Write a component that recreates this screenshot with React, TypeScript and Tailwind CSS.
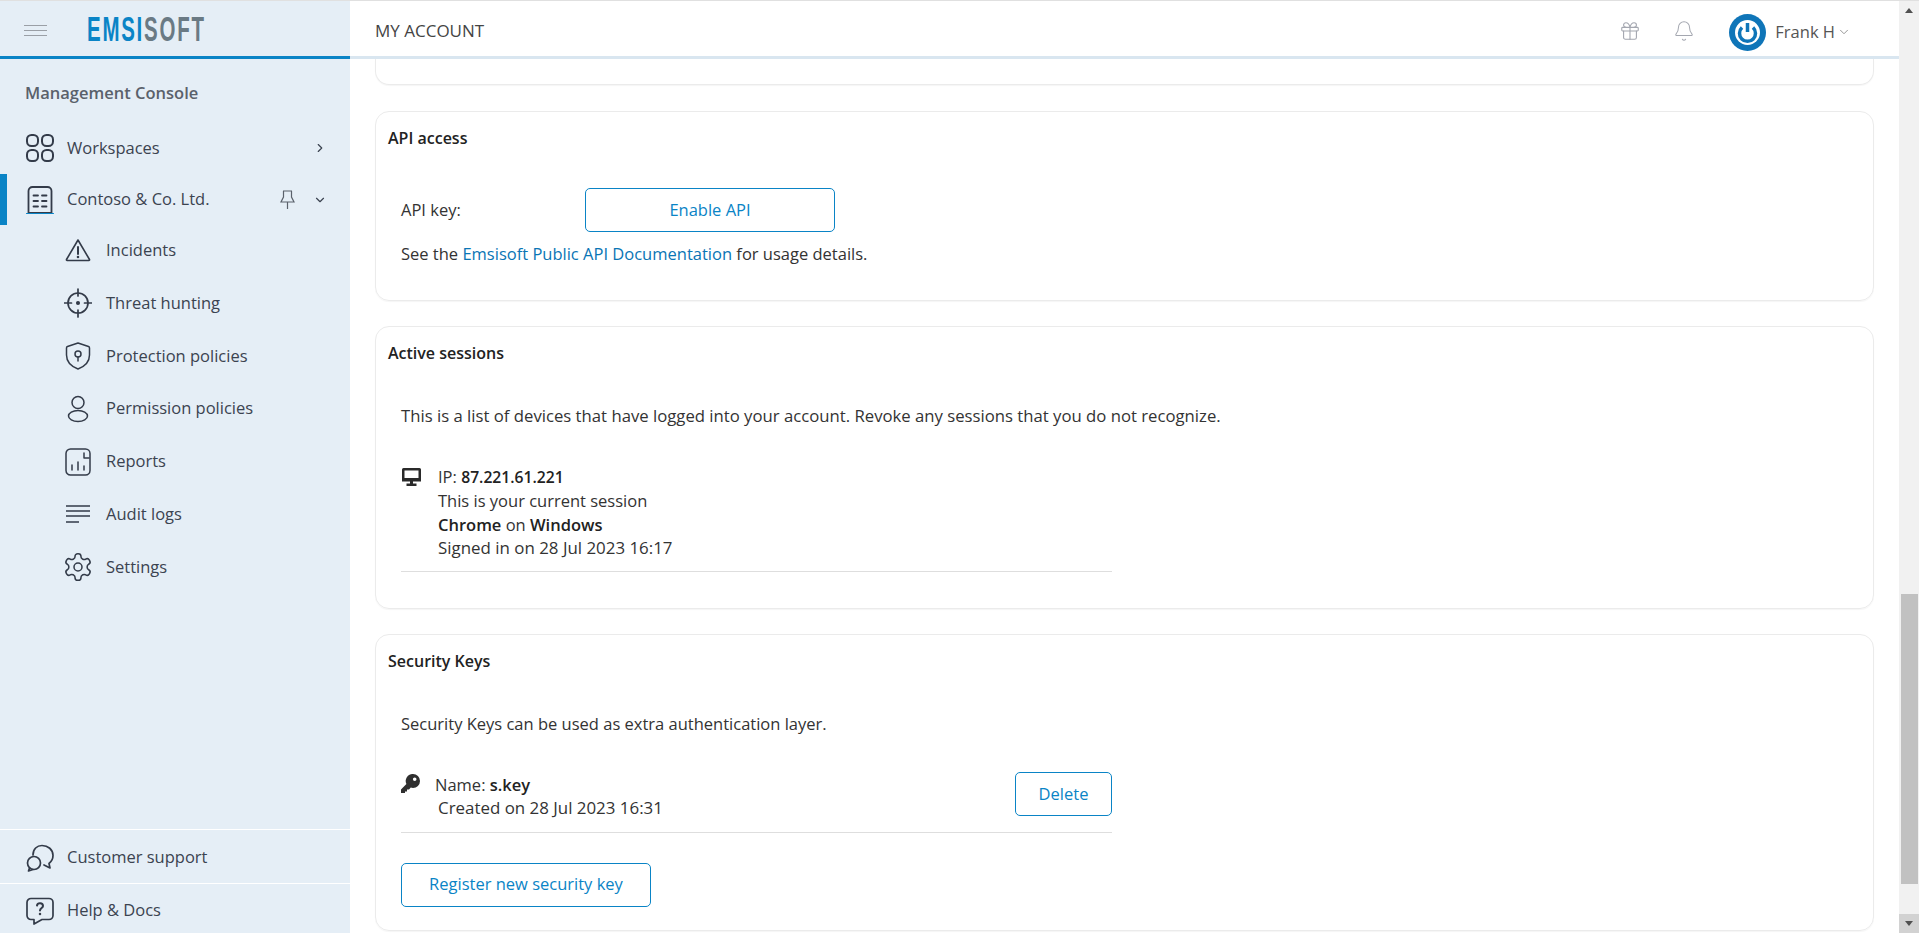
import React from 'react';
import { ChevronDown, ChevronRight, Gift, Bell } from 'lucide-react';

const iconProps = {
  fill: 'none',
  stroke: '#333b49',
  strokeWidth: 1.5,
  strokeLinecap: 'round' as const,
  strokeLinejoin: 'round' as const,
};

const WorkspacesIcon = () => (
  <svg width="28" height="28" viewBox="0 0 28 28" {...iconProps} strokeWidth={2}>
    <rect x="1" y="1" width="11" height="11" rx="4.5" />
    <rect x="16" y="1" width="11" height="11" rx="4.5" />
    <rect x="1" y="16" width="11" height="11" rx="4.5" />
    <rect x="16" y="16" width="11" height="11" rx="4.5" />
  </svg>
);

const BuildingIcon = () => (
  <svg width="28" height="28" viewBox="0 0 28 28" {...iconProps} strokeWidth={1.8}>
    <path d="M2.500 27V5a4 4 0 0 1 4-4h15a4 4 0 0 1 4 4v22z" />
    <path d="M7.500 9.500h4.500M16 9.500h4.500M7.500 15h4.500M16 15h4.500M7.500 20.500h4.500M16 20.500h4.500" />
    <path d="M0.500 27.500h27" stroke="#0a84c6" strokeWidth="1" />
  </svg>
);

const PinIcon = () => (
  <svg width="15" height="19" viewBox="0 0 15 19" fill="none" stroke="#5a616b" strokeWidth="1.200">
    <path d="M3 1h9M3.500 1v6L1 12h13l-2.500-5V1M7.500 12v7" />
  </svg>
);

const IncidentsIcon = () => (
  <svg width="26" height="24" viewBox="0 0 26 24" {...iconProps} strokeWidth={1.6}>
    <path d="M13 2 1.500 21.500a.7.7 0 0 0 .6 1h21.800a.7.7 0 0 0 .6-1z" />
    <path d="M13 9v7" strokeWidth={2} />
    <circle cx="13" cy="19" r="0.600" strokeWidth={1.400} />
  </svg>
);

const ThreatIcon = () => (
  <svg width="28" height="30" viewBox="0 0 28 30" {...iconProps} strokeWidth={1.7}>
    <circle cx="14" cy="15" r="10" />
    <path d="M14 1v7M14 22v7M0.500 15h7M20.500 15h7" />
    <circle cx="14" cy="15" r="1.200" fill="#333b49" />
  </svg>
);

const ShieldIcon = () => (
  <svg width="26" height="28" viewBox="0 0 26 28" {...iconProps}>
    <path d="M13 1 2.500 4.500a1.500 1.500 0 0 0-1 1.400V13c0 6.500 5 11.500 11.500 14 6.500-2.500 11.500-7.500 11.500-14V5.900a1.500 1.500 0 0 0-1-1.400z" />
    <circle cx="13" cy="12" r="3" />
    <path d="M13 15v4" />
  </svg>
);

const PersonIcon = () => (
  <svg width="24" height="28" viewBox="0 0 24 28" {...iconProps}>
    <circle cx="12" cy="7.500" r="6" />
    <ellipse cx="12" cy="21" rx="9.500" ry="5.500" />
  </svg>
);

const ReportsIcon = () => (
  <svg width="26" height="28" viewBox="0 0 26 28" {...iconProps}>
    <rect x="1" y="1" width="24" height="26" rx="4.500" />
    <path d="M7 22v-5M13 22v-8M19 22v-4M19 5v5h5" />
  </svg>
);

const AuditIcon = () => (
  <svg width="24" height="20" viewBox="0 0 24 20" fill="none" stroke="#333b49" strokeWidth="1.500">
    <path d="M0 2h24M0 7h24M0 12h24M0 18h13" />
  </svg>
);

const GearIcon = () => (
  <svg width="32" height="32" viewBox="0 0 24 24" {...iconProps} strokeWidth={1.150}>
    <path d="M12.220 2h-.440a2 2 0 0 0-2 2v.180a2 2 0 0 1-1 1.730l-.430.250a2 2 0 0 1-2 0l-.150-.080a2 2 0 0 0-2.730.730l-.220.380a2 2 0 0 0 .730 2.730l.150.100a2 2 0 0 1 1 1.720v.510a2 2 0 0 1-1 1.740l-.150.090a2 2 0 0 0-.730 2.730l.220.380a2 2 0 0 0 2.730.730l.150-.080a2 2 0 0 1 2 0l.430.250a2 2 0 0 1 1 1.730V20a2 2 0 0 0 2 2h.440a2 2 0 0 0 2-2v-.180a2 2 0 0 1 1-1.730l.430-.250a2 2 0 0 1 2 0l.150.080a2 2 0 0 0 2.730-.730l.220-.390a2 2 0 0 0-.730-2.730l-.150-.080a2 2 0 0 1-1-1.740v-.500a2 2 0 0 1 1-1.740l.150-.090a2 2 0 0 0 .730-2.730l-.220-.380a2 2 0 0 0-2.730-.730l-.150.080a2 2 0 0 1-2 0l-.430-.250a2 2 0 0 1-1-1.730V4a2 2 0 0 0-2-2z" />
    <circle cx="12" cy="12" r="3" />
  </svg>
);

const SupportIcon = () => (
  <svg width="28" height="28" viewBox="0 0 28 28" {...iconProps} strokeWidth={1.700}>
    <path d="M7 11C7 5 11 1.500 16 1.500c6 0 11 4 11 10 0 3.500-1.500 6-4 8l1 4.500-6-3" />
    <circle cx="8" cy="19" r="6.500" />
    <path d="M3.500 24 2.500 27l4.500-1.500" />
  </svg>
);

const HelpIcon = () => (
  <svg width="28" height="28" viewBox="0 0 28 28" {...iconProps} strokeWidth={1.700}>
    <path d="M5 1.500h18a4 4 0 0 1 4 4v13a4 4 0 0 1-4 4h-7l-8 4.500v-4.500H5a4 4 0 0 1-4-4v-13a4 4 0 0 1 4-4z" />
    <path d="M11 8.500c.5-3 6-3 6 .5 0 2-3 2-3 4.500" strokeWidth={2} />
    <circle cx="14" cy="17" r="0.500" strokeWidth={1.500} />
  </svg>
);

const MonitorIcon = () => (
  <svg width="19" height="18" viewBox="0 0 19 18">
    <path d="M0 1.500A1.500 1.500 0 0 1 1.500 0h16A1.500 1.500 0 0 1 19 1.500V13.500H0z" fill="#2a2a2a" />
    <rect x="2.500" y="2.500" width="14" height="7.500" fill="#fff" />
    <rect x="8" y="13" width="3" height="3" fill="#2a2a2a" />
    <rect x="4.500" y="15.500" width="10" height="2.500" fill="#2a2a2a" />
  </svg>
);

const KeyIcon = () => (
  <svg width="19" height="19" viewBox="0 0 19 19" fill="#2f2f2f">
    <path d="M12 0a7 7 0 0 1 0 14c-.800 0-1.500-.100-2.200-.400L8 15.500H6v2H4V19H0v-3.500l5.400-5.400A7 7 0 0 1 12 0zm1.700 3.500a1.800 1.800 0 1 0 0 3.600 1.800 1.800 0 0 0 0-3.600z" />
  </svg>
);

const Logo = () => (
  <svg width="215" height="42" viewBox="0 0 215 42">
    <text transform="scale(0.585 1)" x="0" y="33" letterSpacing="3" fontFamily="'Liberation Sans', sans-serif" fontWeight="700" fontSize="35">
      <tspan fill="#0a84c6">EMSI</tspan><tspan fill="#6a7a84">SOFT</tspan>
    </text>
  </svg>
);

const Avatar = () => (
  <svg width="37" height="37" viewBox="0 0 37 37">
    <circle cx="18.500" cy="18.500" r="18.500" fill="#0f75b8" />
    <circle cx="18.500" cy="18.500" r="12.500" fill="#fff" />
    <path d="M13 13.500a8 8 0 1 0 11 0" fill="none" stroke="#0f75b8" strokeWidth="3.500" />
    <path d="M18.500 9v9" stroke="#0f75b8" strokeWidth="3.500" />
  </svg>
);

const subItems = [
  { label: 'Incidents', icon: <IncidentsIcon /> },
  { label: 'Threat hunting', icon: <ThreatIcon /> },
  { label: 'Protection policies', icon: <ShieldIcon /> },
  { label: 'Permission policies', icon: <PersonIcon /> },
  { label: 'Reports', icon: <ReportsIcon /> },
  { label: 'Audit logs', icon: <AuditIcon /> },
  { label: 'Settings', icon: <GearIcon /> },
];

const Sidebar = () => (
  <aside className="w-[350px] shrink-0 flex flex-col bg-[#e5eef6] text-[#3b4350] text-[16.500px]">
    <div className="h-[58px] shrink-0 flex items-center border-b-[3px] border-[#0a84c6]">
      <div className="ml-[24px] mt-[3px] flex flex-col gap-[4px] w-[23px]">
        <div className="h-[1px] bg-[#9a9fa6]"></div>
        <div className="h-[1px] bg-[#9a9fa6]"></div>
        <div className="h-[1px] bg-[#9a9fa6]"></div>
      </div>
      <div className="ml-[40px]">
        <Logo />
      </div>
    </div>
    <div className="mt-[22px] pl-[25px] h-[24px] flex items-center font-semibold text-[#5a616b]">Management Console</div>
    <div className="mt-[16px] h-[54px] shrink-0 flex items-center pl-[26px]">
      <WorkspacesIcon />
      <span className="ml-[13px]">Workspaces</span>
      <ChevronRight className="ml-auto mr-[23px] w-[14px] h-[14px]" strokeWidth={2} />
    </div>
    <div className="h-[49px] shrink-0 flex items-center pl-[26px] relative">
      <div className="absolute left-0 -top-[1px] -bottom-[1px] w-[7px] bg-[#0a84c6]"></div>
      <BuildingIcon />
      <span className="ml-[13px]">Contoso &amp; Co. Ltd.</span>
      <div className="ml-auto">
        <PinIcon />
      </div>
      <ChevronDown className="ml-[18px] mr-[23px] w-[14px] h-[14px]" strokeWidth={2} />
    </div>
    {subItems.map((item) => (
      <div key={item.label} className="h-[52.800px] shrink-0 flex items-center pl-[62px]">
        <div className="w-[32px] flex justify-center">{item.icon}</div>
        <span className="ml-[12px]">{item.label}</span>
      </div>
    ))}
    <div className="mt-auto h-[54px] pt-[2px] flex items-center pl-[26px] border-t border-white">
      <SupportIcon />
      <span className="ml-[13px]">Customer support</span>
    </div>
    <div className="h-[50px] pt-[4px] flex items-center pl-[26px] border-t border-white">
      <HelpIcon />
      <span className="ml-[13px]">Help &amp; Docs</span>
    </div>
  </aside>
);

const Header = () => (
  <header className="h-[58px] pt-[4px] shrink-0 flex items-center border-b-[3px] border-[#d9e6f0] bg-white">
    <span className="ml-[25px] text-[17px] text-[#444]">MY ACCOUNT</span>
    <Gift className="ml-auto w-[22px] h-[22px] text-[#a4a7b0]" strokeWidth={1.200} />
    <Bell className="ml-[32px] w-[22px] h-[22px] text-[#a4a7b0]" strokeWidth={1.100} />
    <div className="ml-[34px] mt-[4px]">
      <Avatar />
    </div>
    <span className="ml-[9px] mt-[3px] text-[16.500px] text-[#555]">Frank H</span>
    <ChevronDown className="ml-[2px] mr-[48px] mt-[3px] w-[14px] h-[14px] text-[#888]" strokeWidth={1.500} />
  </header>
);

const Card = ({ title, children, className }: { title: string; children: React.ReactNode; className: string }) => (
  <section className={`mr-[25px] rounded-[14px] border border-[#ebebeb] shadow-[0_1px_1px_rgba(0,0,0,0.04)] ${className}`}>
    <h2 className="pl-[12px] pt-[14px] h-[42px] leading-[24px] text-[16px] font-semibold text-[#222]">{title}</h2>
    {children}
  </section>
);

const Main = () => (
  <main className="flex-1 flex flex-col min-w-0 text-[16.500px] text-[#333]">
    <Header />
    <div className="flex-1 overflow-hidden pl-[25px]">
      <div className="mr-[25px] h-[26px] rounded-b-[14px] border border-t-0 border-[#ebebeb] shadow-[0_1px_1px_rgba(0,0,0,0.04)]"></div>

      <Card title="API access" className="mt-[26px] h-[190px]">
        <div className="mt-[34px] ml-[25px] flex items-center">
          <span className="w-[184px]">API key:</span>
          <button className="w-[250px] h-[44px] rounded-[5px] border border-[#0a84c6] text-[#0a84c6]">Enable API</button>
        </div>
        <p className="mt-[10px] ml-[25px]">
          See the <span className="text-[#0a75b5]">Emsisoft Public API Documentation</span> for usage details.
        </p>
      </Card>

      <Card title="Active sessions" className="mt-[25px] h-[283px]">
        <p className="mt-[35px] ml-[25px] leading-[24px] text-[16.720px]">
          This is a list of devices that have logged into your account. Revoke any sessions that you do not recognize.
        </p>
        <div className="mt-[37px] ml-[25px] w-[711px] border-b border-[#dedede] pb-[12px] flex">
          <div className="mt-[3px] ml-[1px]">
            <MonitorIcon />
          </div>
          <div className="ml-[17px] leading-[23.300px]">
            <div>
              IP: <b className="font-semibold text-[15.700px] text-[#222]">87.221.61.221</b>
            </div>
            <div>This is your current session</div>
            <div>
              <b className="font-semibold text-[#222]">Chrome</b> on <b className="font-semibold text-[#222]">Windows</b>
            </div>
            <div className="text-[16.900px]">Signed in on 28 Jul 2023 16:17</div>
          </div>
        </div>
      </Card>

      <Card title="Security Keys" className="mt-[25px] h-[297px]">
        <p className="mt-[35px] ml-[25px] leading-[24px]">Security Keys can be used as extra authentication layer.</p>
        <div className="mt-[37px] ml-[25px] w-[711px] border-b border-[#dedede] pb-[12px] flex relative">
          <div className="mt-[1px]">
            <KeyIcon />
          </div>
          <div className="ml-[15px] leading-[23.300px]">
            <div>
              Name: <b className="font-semibold text-[#222]">s.key</b>
            </div>
            <div className="ml-[3px] text-[16.900px]">Created on 28 Jul 2023 16:31</div>
          </div>
          <button className="absolute right-0 -top-[1px] w-[97px] h-[44px] rounded-[5px] border border-[#0a84c6] text-[#0a84c6]">Delete</button>
        </div>
        <button className="mt-[30px] ml-[25px] w-[250px] h-[44px] rounded-[5px] border border-[#0a84c6] text-[#0a84c6]">Register new security key</button>
      </Card>
    </div>
  </main>
);

const Scrollbar = () => (
  <div className="w-[20px] shrink-0 flex flex-col items-center bg-[#f1f1f1]">
    <div className="h-[19px] flex items-center justify-center">
      <div className="w-0 h-0 border-x-[4px] border-x-transparent border-b-[5px] border-b-[#505050]"></div>
    </div>
    <div className="mt-[574px] w-[17px] h-[290px] bg-[#c1c1c1]"></div>
    <div className="mt-auto h-[19px] w-full bg-[#d2d2d2] flex items-center justify-center">
      <div className="w-0 h-0 border-x-[4px] border-x-transparent border-t-[5px] border-t-[#505050]"></div>
    </div>
  </div>
);

export default function App() {
  return (
    <div className="h-[933px] w-full overflow-hidden flex flex-col bg-white font-['Open_Sans',sans-serif]">
      <div className="h-[1px] shrink-0 bg-[#e0e0e0]"></div>
      <div className="flex-1 flex min-h-0">
        <Sidebar />
        <Main />
        <Scrollbar />
      </div>
    </div>
  );
}
